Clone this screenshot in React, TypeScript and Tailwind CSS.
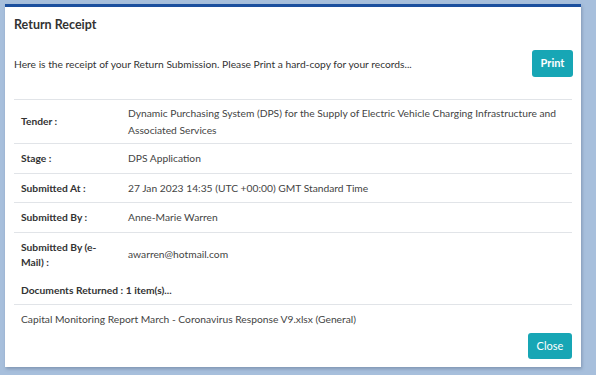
const ROWS = [
  {
    label: 'Tender :',
    value: 'Dynamic Purchasing System (DPS) for the Supply of Electric Vehicle Charging Infrastructure and Associated Services',
    h: 'h-[44px]',
  },
  { label: 'Stage :', value: 'DPS Application', h: 'h-[30px]' },
  { label: 'Submitted At :', value: '27 Jan 2023 14:35 (UTC +00:00) GMT Standard Time', h: 'h-[29px]' },
  { label: 'Submitted By :', value: 'Anne-Marie Warren', h: 'h-[30px]' },
]

export default function App() {
  return (
    <div
      className="w-[596px] h-[375px] bg-[#a7bfdc] pt-[4px] pl-[5px] overflow-hidden"
      style={{ fontFamily: 'Lato, "Open Sans", sans-serif' }}
    >
      <div className="w-[576px] h-[363px] bg-white border-t-[3px] border-[#1b4f9e] shadow-[1px_2px_3px_rgba(60,80,110,0.35)] flex flex-col px-[9px]">
        {/* Header */}
        <h1 className="pt-[10px] text-[12.5px] leading-[16px] font-bold text-[#333]">Return Receipt</h1>

        <div className="mt-[17px] flex items-center justify-between">
          <p className="text-[10.25px] text-[#333] leading-[16px]">
            Here is the receipt of your Return Submission. Please Print a hard-copy for your records...
          </p>
          <button className="w-[41px] h-[27px] mr-[-1px] rounded-[3px] bg-[#17a6b5] text-white text-[11px] font-bold">
            Print
          </button>
        </div>

        {/* Details table */}
        <div className="mt-[22px] border-t border-[#e1e4e8] text-[10.25px] leading-[17px] text-[#444]">
          {ROWS.map(row => (
            <div key={row.label} className={`flex items-center border-b border-[#e1e4e8] ${row.h}`}>
              <div className="w-[107px] pl-[7px] font-bold text-[#333]">{row.label}</div>
              <div className="flex-1 pl-[7px] pr-[4px]">{row.value}</div>
            </div>
          ))}
          <div className="flex items-center h-[43px] leading-[15px]">
            <div className="w-[107px] pl-[7px] pr-[10px] font-bold text-[#333]">Submitted By (e-Mail) :</div>
            <div className="flex-1 pl-[7px]">awarren@hotmail.com</div>
          </div>
          <div className="flex items-center h-[29px] border-b border-[#e1e4e8] pl-[7px] font-bold text-[#333]">
            Documents Returned : 1 item(s)...
          </div>
          <div className="flex items-center h-[29px] pl-[7px]">
            Capital Monitoring Report March - Coronavirus Response V9.xlsx (General)
          </div>
        </div>

        <div className="mt-[-1px] flex justify-end">
          <button className="w-[44px] h-[26px] rounded-[3px] bg-[#17a6b5] text-white text-[11px]">Close</button>
        </div>
      </div>
    </div>
  )
}
